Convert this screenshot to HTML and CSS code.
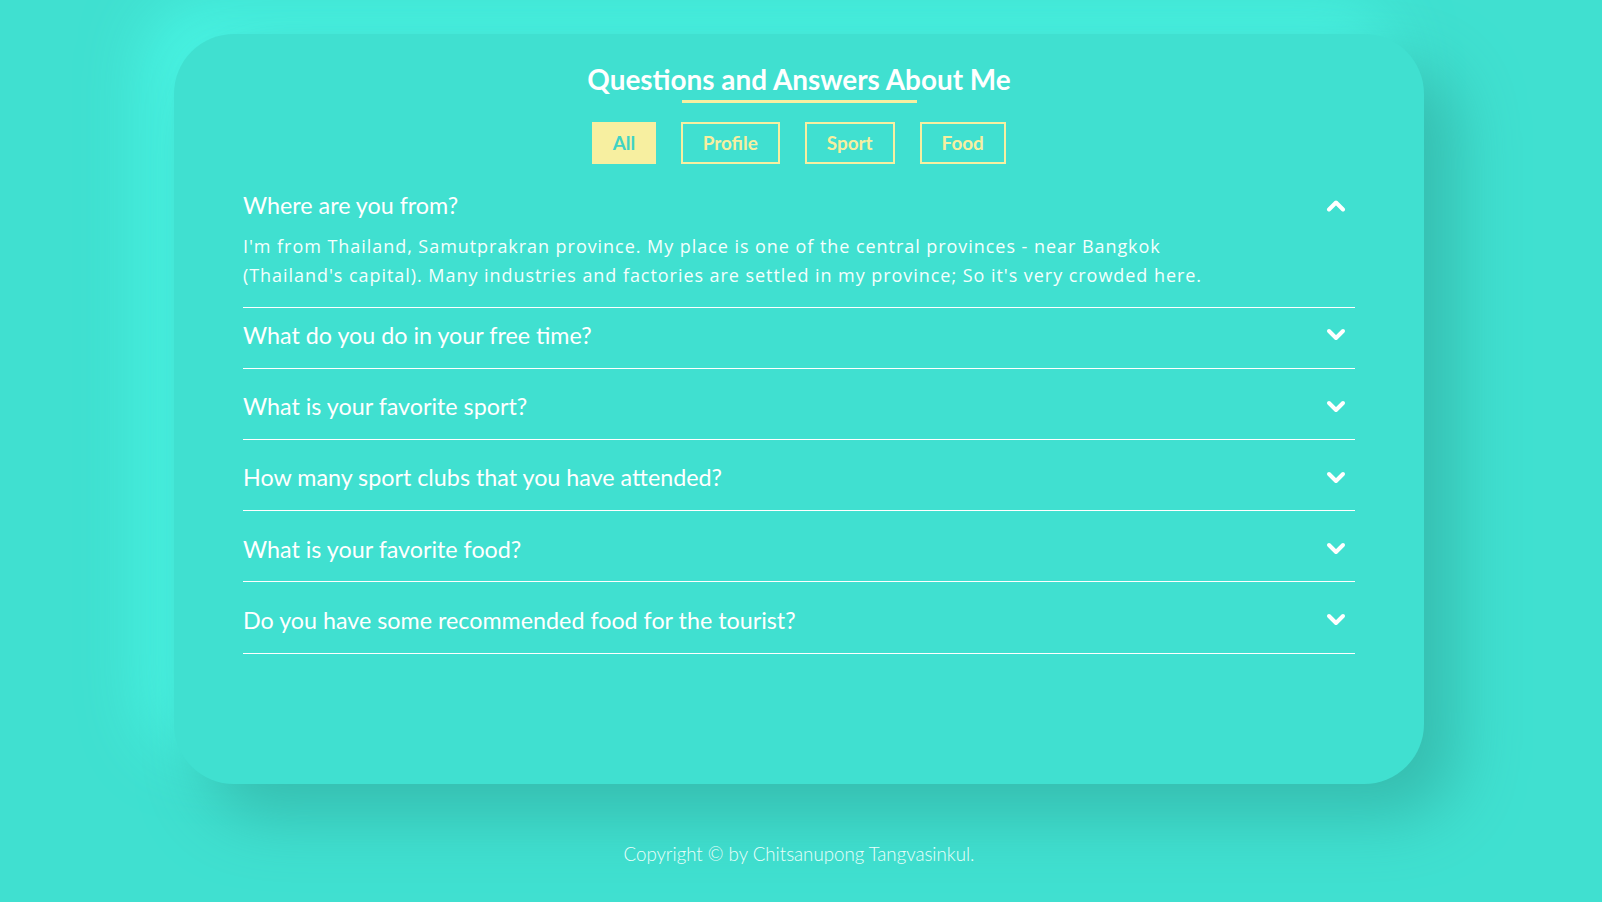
FILE: index.html
```html
<!DOCTYPE html>
<html lang="en">
<head>
<meta charset="utf-8">
<title>Questions and Answers About Me</title>
<link rel="stylesheet" href="styles.css">
</head>
<body>
<div class="page">
  <main class="card">
    <header class="card-header">
      <h1 class="title">Questions and Answers About Me</h1>
      <div class="title-bar"></div>
      <nav class="filters">
        <button class="filter filter--active">All</button>
        <button class="filter">Profile</button>
        <button class="filter">Sport</button>
        <button class="filter">Food</button>
      </nav>
    </header>

    <section class="faq">
      <div class="faq-item faq-item--open">
        <div class="question">
          <span class="question-text">Where are you from?</span>
          <svg class="chevron" viewBox="0 0 20 13" width="20" height="13"><polyline points="3,10.5 10,3.5 17,10.5"/></svg>
        </div>
        <p class="answer">I'm from Thailand, Samutprakran province. My place is one of the central provinces - near Bangkok (Thailand's capital). Many industries and factories are settled in my province; So it's very crowded here.</p>
      </div>
      <div class="faq-item">
        <div class="question">
          <span class="question-text">What do you do in your free time?</span>
          <svg class="chevron" viewBox="0 0 20 13" width="20" height="13"><polyline points="3,3 10,10 17,3"/></svg>
        </div>
      </div>
      <div class="faq-item">
        <div class="question">
          <span class="question-text">What is your favorite sport?</span>
          <svg class="chevron" viewBox="0 0 20 13" width="20" height="13"><polyline points="3,3 10,10 17,3"/></svg>
        </div>
      </div>
      <div class="faq-item">
        <div class="question">
          <span class="question-text">How many sport clubs that you have attended?</span>
          <svg class="chevron" viewBox="0 0 20 13" width="20" height="13"><polyline points="3,3 10,10 17,3"/></svg>
        </div>
      </div>
      <div class="faq-item">
        <div class="question">
          <span class="question-text">What is your favorite food?</span>
          <svg class="chevron" viewBox="0 0 20 13" width="20" height="13"><polyline points="3,3 10,10 17,3"/></svg>
        </div>
      </div>
      <div class="faq-item">
        <div class="question">
          <span class="question-text">Do you have some recommended food for the tourist?</span>
          <svg class="chevron" viewBox="0 0 20 13" width="20" height="13"><polyline points="3,3 10,10 17,3"/></svg>
        </div>
      </div>
    </section>
  </main>

  <footer class="footer">Copyright © by Chitsanupong Tangvasinkul.</footer>
</div>
</body>
</html>
```
FILE: styles.css
```css
* {
  box-sizing: border-box;
}

html,
body {
  margin: 0;
  padding: 0;
  background: #40e0d0;
  overflow: hidden;
}

body {
  font-family: "Lato", "Liberation Sans", sans-serif;
  color: #ffffff;
}

.page {
  width: 1602px;
  height: 902px;
  padding: 34px 4px 0 0;
}

.card {
  width: 1250px;
  min-height: 750px;
  margin: 0 auto;
  padding: 28px 69px 40px;
  background: #40e0d0;
  border-radius: 60px;
  box-shadow: 32px 32px 64px #36bdaf, -30px -30px 60px #49f4e3;
}

.card-header {
  display: flex;
  flex-direction: column;
  align-items: center;
}

.title {
  margin: 0;
  font-size: 27.9px;
  font-weight: 700;
  line-height: 34px;
  color: #ffffff;
}

.title-bar {
  width: 235px;
  height: 3px;
  margin-top: 4px;
  background: #f7efa0;
}

.filters {
  display: flex;
  gap: 25px;
  margin-top: 19px;
  margin-bottom: 3.5px;
}

.filter {
  height: 42px;
  padding: 0 20px;
  border: 2px solid #f7efa0;
  background: transparent;
  color: #f7efa0;
  font-family: "Lato", "Liberation Sans", sans-serif;
  font-size: 18.9px;
  font-weight: 700;
  line-height: 38px;
  cursor: pointer;
}

.filter--active {
  padding: 0 18.5px;
  background: #f7efa0;
  color: #3fd3c4;
}

.faq {
  display: flex;
  flex-direction: column;
}

.faq-item {
  margin-top: 11px;
  padding: 11.5px 0 17.8px;
  border-bottom: 1px solid #ffffff;
}

.faq-item--open {
  margin-bottom: -11px;
}

.question {
  display: flex;
  align-items: center;
  justify-content: space-between;
  padding-right: 9px;
}

.question-text {
  font-size: 23.3px;
  line-height: 30px;
  color: #ffffff;
}

.chevron {
  display: block;
  fill: none;
  stroke: #ffffff;
  stroke-width: 4;
  stroke-linecap: round;
  stroke-linejoin: round;
}

.answer {
  max-width: 990px;
  margin: 11.5px 0 0;
  font-family: "Open Sans", "Noto Sans", sans-serif;
  font-size: 18px;
  line-height: 29px;
  letter-spacing: 0.95px;
  color: #f4fffd;
}

.footer {
  margin-top: 58px;
  text-align: center;
  font-size: 18.7px;
  font-weight: 300;
  line-height: 24px;
  color: #eafffb;
}
```
